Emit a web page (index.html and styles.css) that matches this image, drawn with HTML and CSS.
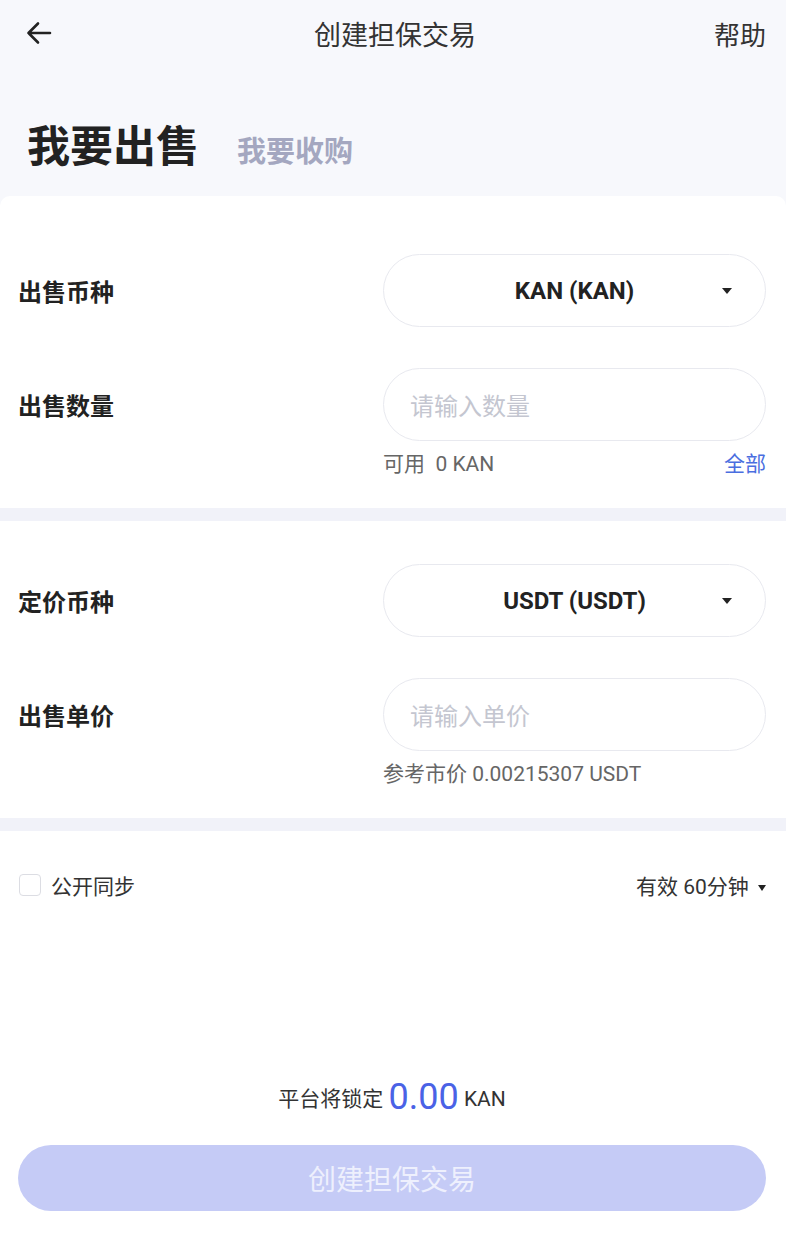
FILE: index.html
```html
<!DOCTYPE html>
<html lang="zh-CN">
<head>
    <meta charset="UTF-8">
    <meta name="viewport" content="width=device-width, initial-scale=1.0">
    <title>创建担保交易</title>
    <link rel="stylesheet" href="styles.css">
</head>
<body>
    <div class="page">
        <div class="top">
            <div class="navbar">
                <span class="back">
                    <svg width="30" height="30" viewBox="0 0 30 30">
                        <path d="M26 15H4.5M14 5.5L4.5 15L14 24.5" fill="none" stroke="#222" stroke-width="2.6" stroke-linecap="round" stroke-linejoin="round"/>
                    </svg>
                </span>
                <span class="nav-title">创建担保交易</span>
                <span class="nav-help">帮助</span>
            </div>
            <div class="tabs">
                <span class="tab active">我要出售</span>
                <span class="tab">我要收购</span>
            </div>
        </div>

        <div class="card">
            <div class="section first">
                <div class="row">
                    <span class="label">出售币种</span>
                    <div class="field select">
                        <span class="select-value">KAN (KAN)</span>
                        <span class="caret"></span>
                    </div>
                </div>
                <div class="row spaced">
                    <span class="label">出售数量</span>
                    <div class="field input">
                        <span class="placeholder">请输入数量</span>
                    </div>
                </div>
                <div class="hint-row">
                    <span class="hint">可用&nbsp; 0 KAN</span>
                    <span class="link">全部</span>
                </div>
            </div>

            <div class="divider"></div>

            <div class="section">
                <div class="row">
                    <span class="label">定价币种</span>
                    <div class="field select">
                        <span class="select-value">USDT (USDT)</span>
                        <span class="caret"></span>
                    </div>
                </div>
                <div class="row spaced">
                    <span class="label">出售单价</span>
                    <div class="field input">
                        <span class="placeholder">请输入单价</span>
                    </div>
                </div>
                <div class="hint-row">
                    <span class="hint">参考市价 0.00215307 USDT</span>
                </div>
            </div>

            <div class="divider"></div>

            <div class="options">
                <label class="check">
                    <span class="box"></span>
                    <span>公开同步</span>
                </label>
                <span class="expire">有效 60分钟 <span class="caret small"></span></span>
            </div>

            <div class="footer">
                <div class="lock">平台将锁定 <span class="amount">0.00</span> <span class="unit">KAN</span></div>
                <button class="submit">创建担保交易</button>
            </div>
        </div>
    </div>
</body>
</html>
```

FILE: styles.css
```css
body {
    margin: 0;
    font-family: Roboto, "Noto Sans CJK SC", sans-serif;
    color: #222;
    background-color: #f7f8fc;
}
.page {
    display: flex;
    flex-direction: column;
    min-height: 1236px;
}
.top {
    background-color: #f7f8fc;
}
.navbar {
    display: flex;
    align-items: center;
    justify-content: space-between;
    height: 66px;
    padding: 0 20px 2px 24px;
}
.back {
    display: flex;
    width: 60px;
}
.nav-title {
    font-size: 27px;
    color: #333;
}
.nav-help {
    width: 60px;
    text-align: right;
    font-size: 26px;
    color: #333;
}
.tabs {
    display: flex;
    align-items: baseline;
    gap: 38px;
    padding: 58px 27px 0;
    height: 128px;
    box-sizing: border-box;
}
.tab {
    font-size: 29px;
    line-height: 29px;
    font-weight: bold;
    color: #a4a7c0;
}
.tab.active {
    font-size: 43px;
    line-height: 43px;
    color: #222;
}
.card {
    flex: 1;
    display: flex;
    flex-direction: column;
    background-color: #fff;
    border-radius: 10px 10px 0 0;
}
.section {
    padding: 43px 20px 34px 18px;
}
.section.first {
    padding-top: 58px;
}
.row {
    display: flex;
    align-items: center;
    justify-content: space-between;
}
.row.spaced {
    margin-top: 41px;
}
.label {
    font-size: 24px;
    font-weight: bold;
}
.field {
    display: flex;
    align-items: center;
    width: 383px;
    height: 73px;
    box-sizing: border-box;
    border: 1px solid #e8e9ef;
    border-radius: 37px;
}
.select {
    justify-content: center;
    position: relative;
}
.select-value {
    font-size: 24px;
    font-weight: bold;
    color: #222;
}
.caret {
    position: absolute;
    right: 33px;
    top: 33px;
    width: 0;
    height: 0;
    border-left: 5px solid transparent;
    border-right: 5px solid transparent;
    border-top: 6px solid #222;
}
.caret.small {
    position: static;
    display: inline-block;
    vertical-align: middle;
    margin-left: 4px;
    border-left-width: 4px;
    border-right-width: 4px;
}
.input {
    padding-left: 26px;
}
.placeholder {
    font-size: 24px;
    color: #c4c6d0;
}
.hint-row {
    display: flex;
    justify-content: space-between;
    margin-left: 365px;
    margin-top: 9px;
    height: 24px;
    align-items: center;
}
.hint {
    font-size: 21px;
    color: #666;
}
.link {
    font-size: 21px;
    color: #4a6ee0;
}
.divider {
    height: 13px;
    background-color: #f1f2f9;
}
.options {
    display: flex;
    justify-content: space-between;
    align-items: center;
    padding: 42px 20px 0 19px;
    height: 24px;
}
.check {
    display: flex;
    align-items: center;
    gap: 10px;
    font-size: 21px;
    color: #333;
}
.box {
    width: 22px;
    height: 22px;
    box-sizing: border-box;
    border: 1.5px solid #dcdde3;
    border-radius: 4px;
}
.expire {
    font-size: 21px;
    color: #333;
}
.footer {
    margin-top: auto;
    padding: 0 20px 25px 18px;
}
.lock {
    text-align: center;
    font-size: 21px;
    color: #333;
    height: 44px;
    line-height: 44px;
}
.amount {
    font-size: 36px;
    color: #4a62e6;
    vertical-align: -3px;
}
.unit {
    font-size: 21px;
}
.submit {
    display: block;
    width: 100%;
    height: 66px;
    margin-top: 26px;
    border: none;
    border-radius: 33px;
    background-color: #c5cbf6;
    color: #eef0fd;
    font-family: Roboto, "Noto Sans CJK SC", sans-serif;
    font-size: 28px;
}
```
